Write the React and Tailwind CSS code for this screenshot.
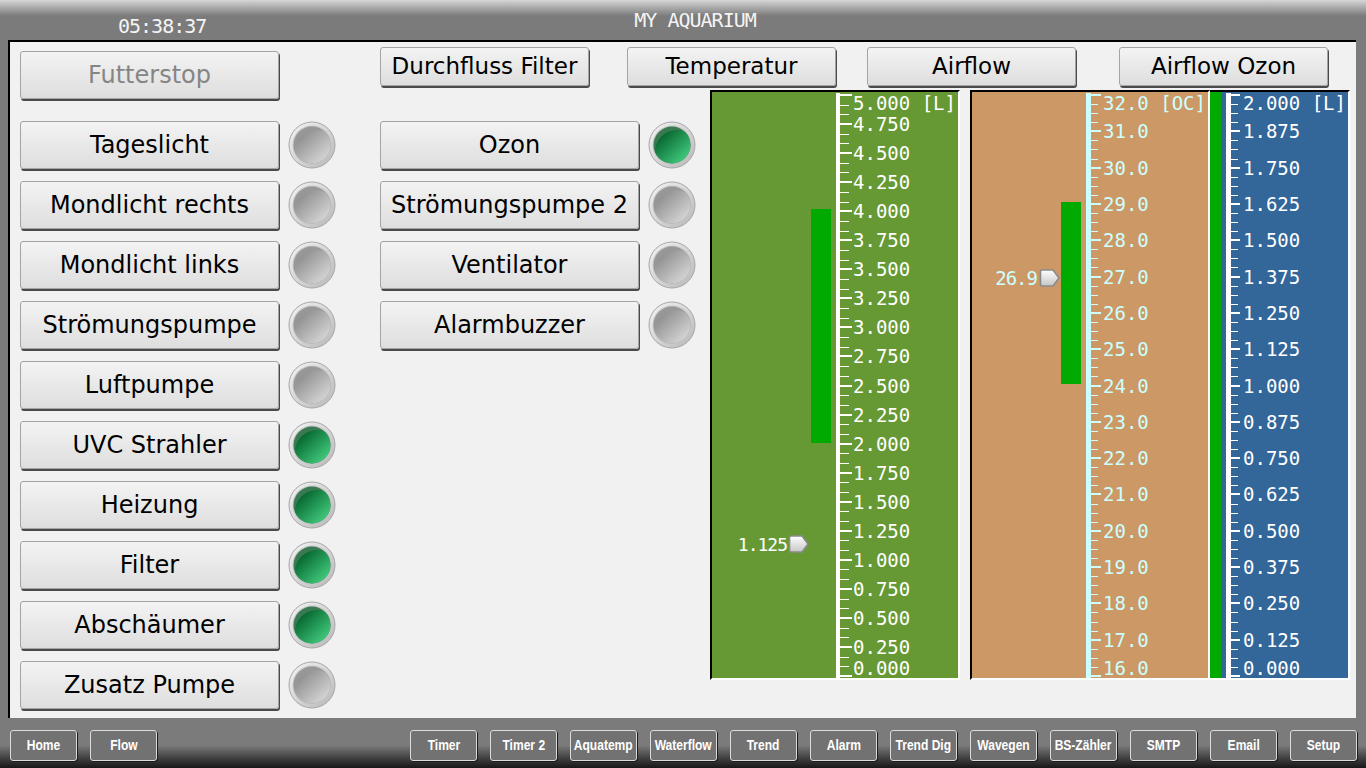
import React from 'react';

const leftItems = [
  { label: 'Tageslicht', on: false },
  { label: 'Mondlicht rechts', on: false },
  { label: 'Mondlicht links', on: false },
  { label: 'Strömungspumpe', on: false },
  { label: 'Luftpumpe', on: false },
  { label: 'UVC Strahler', on: true },
  { label: 'Heizung', on: true },
  { label: 'Filter', on: true },
  { label: 'Abschäumer', on: true },
  { label: 'Zusatz Pumpe', on: false },
];

const midItems = [
  { label: 'Ozon', on: true },
  { label: 'Strömungspumpe 2', on: false },
  { label: 'Ventilator', on: false },
  { label: 'Alarmbuzzer', on: false },
];

const navRight = ['Timer', 'Timer 2', 'Aquatemp', 'Waterflow', 'Trend', 'Alarm', 'Trend Dig', 'Wavegen', 'BS-Zähler', 'SMTP', 'Email', 'Setup'];

const btnBase =
  "flex items-center justify-center rounded-[3px] border border-[#a4a4a4] bg-linear-to-b from-[#f3f3f3] to-[#dedede] shadow-[1px_2px_0_#4a4a4a] font-['DejaVu_Sans',sans-serif] whitespace-nowrap";

// LED lamp
function Led({ on }) {
  const cap = on ? '#3a7a52' : '#979797';
  const a = on ? '#02602a' : '#8c8c8c';
  const b = on ? '#5cf7a0' : '#f4f4f4';
  const gid = on ? 'ledOnGrad' : 'ledOffGrad';
  return (
    <svg width="48" height="48" viewBox="0 0 48 48" className="shrink-0">
      <defs>
        <linearGradient id="ledRingGrad" x1="0" y1="0" x2="1" y2="1">
          <stop offset="0" stopColor="#f6f6f6" />
          <stop offset="1" stopColor="#b6b6b6" />
        </linearGradient>
        <linearGradient id={gid} x1="0.1" y1="0.1" x2="0.9" y2="0.95">
          <stop offset="0" stopColor={a} />
          <stop offset="1" stopColor={b} />
        </linearGradient>
        <clipPath id="ledClip">
          <circle cx="24" cy="24" r="18.5" />
        </clipPath>
      </defs>
      <circle cx="24" cy="24" r="23" fill="url(#ledRingGrad)" stroke="#a6a6a6" strokeWidth="1" />
      <circle cx="24" cy="24" r="19.5" fill="#c4c4c4" />
      <circle cx="24" cy="24" r="18.5" fill={cap} />
      <g clipPath="url(#ledClip)">
        <circle cx="29" cy="31" r="22" fill={`url(#${gid})`} />
      </g>
    </svg>
  );
}

function Marker() {
  return (
    <svg width="22" height="20" viewBox="0 0 22 20">
      <defs>
        <linearGradient id="markerGrad" x1="0" y1="0" x2="0" y2="1">
          <stop offset="0" stopColor="#ffffff" />
          <stop offset="1" stopColor="#c6c6c6" />
        </linearGradient>
      </defs>
      <path d="M3 2 H14 L20 10 L14 18 H3 Q1.5 18 1.5 16.5 V3.5 Q1.5 2 3 2 Z" fill="url(#markerGrad)" stroke="#8a8a8a" strokeWidth="1.6" />
    </svg>
  );
}

// scale with ticks + labels, drawn inside a gauge
function Scale({ labels, sub, lineX, lineW, majorLen, minorLen, labelX, color }) {
  const n = (labels.length - 1) * sub;
  const ticks = [];
  for (let k = 0; k <= n; k++) {
    const y = 3 + (k * 581) / n;
    const major = k % sub === 0;
    ticks.push(
      <rect
        key={k}
        x={lineX + lineW}
        y={major ? Math.round(y) - 1 : Math.round(y)}
        width={major ? majorLen : minorLen}
        height={major ? 2 : 1}
        fill={color}
      />
    );
  }
  return (
    <>
      <svg className="absolute left-0 top-0" width="250" height="586">
        <rect x={lineX} y="1" width={lineW} height="585" fill={color} />
        {ticks}
      </svg>
      {labels.map((t, i) => {
        const y = 3 + (i * 581) / (labels.length - 1);
        const top = Math.min(566, Math.max(1, y - 10));
        return (
          <div
            key={i}
            className="absolute text-[19px] leading-[20px] whitespace-pre font-['DejaVu_Sans_Mono',monospace]"
            style={{ left: labelX, top, color }}
          >
            {t}
          </div>
        );
      })}
    </>
  );
}

const g1Labels = Array.from({ length: 21 }, (_, i) => (i === 0 ? '5.000 [L]' : (5 - i * 0.25).toFixed(3)));
const g2Labels = Array.from({ length: 17 }, (_, i) => (i === 0 ? '32.0 [OC]' : (32 - i).toFixed(1)));
const g3Labels = Array.from({ length: 17 }, (_, i) => (i === 0 ? '2.000 [L]' : (2 - i * 0.125).toFixed(3)));

function NavBtn({ text }) {
  return (
    <div className="w-[67px] h-[31px] flex items-center justify-center rounded-[3px] border border-[#dcdcdc] bg-[#727272] shadow-[1px_1px_0_#1c1c1c] whitespace-nowrap">
      <span className="inline-block scale-x-[0.86]">{text}</span>
    </div>
  );
}

export default function App() {
  return (
    <div className="w-[1366px] h-[768px] flex flex-col bg-[#7b7b7b] overflow-hidden">
      {/* header */}
      <div className="h-[40px] shrink-0 flex items-start bg-linear-to-b from-[#d6d6d6] to-[#7b7b7b] to-[40%] text-[#f4f4f4] font-['DejaVu_Sans_Mono',monospace] text-[20px] leading-[20px] tracking-[-1px]">
        <span className="ml-[118px] mt-[16px]">05:38:37</span>
        <span className="ml-[428px] mt-[10px]">MY AQUARIUM</span>
      </div>

      {/* main panel */}
      <div className="ml-[8px] w-[1348px] h-[678px] shrink-0 border-t-2 border-l-2 border-black bg-[#f1f1f1] flex items-start">
        {/* left column */}
        <div className="ml-[10px] mt-[9px] flex flex-col">
          <div className={`${btnBase} w-[259px] h-[48px] text-[24px] text-[#858585]`}>Futterstop</div>
          <div className="mt-[22px] flex flex-col gap-[12px]">
            {leftItems.map((it) => (
              <div key={it.label} className="flex items-center gap-[9px]">
                <div className={`${btnBase} w-[259px] h-[48px] text-[24px] text-black`}>{it.label}</div>
                <Led on={it.on} />
              </div>
            ))}
          </div>
        </div>

        {/* right part */}
        <div className="ml-[44px] mt-[5px] flex flex-col">
          <div className="flex">
            <div className={`${btnBase} w-[209px] h-[39px] text-[23px] text-black`}>Durchfluss Filter</div>
            <div className={`${btnBase} ml-[38px] w-[209px] h-[39px] text-[23px] text-black`}>Temperatur</div>
            <div className={`${btnBase} ml-[31px] w-[209px] h-[39px] text-[23px] text-black`}>Airflow</div>
            <div className={`${btnBase} ml-[43px] w-[209px] h-[39px] text-[23px] text-black`}>Airflow Ozon</div>
          </div>

          <div className="flex items-start">
            <div className="mt-[35px] flex flex-col gap-[12px]">
              {midItems.map((it) => (
                <div key={it.label} className="flex items-center gap-[9px]">
                  <div className={`${btnBase} w-[259px] h-[48px] text-[24px] text-black`}>{it.label}</div>
                  <Led on={it.on} />
                </div>
              ))}
            </div>

            {/* gauges */}
            <div className="ml-[14px] mt-[4px] flex">
              <div className="relative w-[250px] h-[590px] border-2 border-t-black border-l-black border-r-white border-b-white bg-[#669933] overflow-hidden">
                <Scale labels={g1Labels} sub={3} lineX={124} lineW={4} majorLen={12} minorLen={9} labelX={141} color="#ffffff" />
                <div className="absolute left-[99px] top-[117px] w-[20px] h-[234px] bg-[#00aa00]" />
                <div className="absolute left-[76px] top-[442px]">
                  <Marker />
                </div>
                <div className="absolute right-[171px] top-[443px] text-[18px] leading-[20px] tracking-[-1px] text-white font-['DejaVu_Sans_Mono',monospace]">
                  1.125
                </div>
              </div>

              <div className="ml-[10px] relative w-[240px] h-[590px] border-2 border-t-black border-l-black border-r-white border-b-white bg-[#cc9966] overflow-hidden">
                <Scale labels={g2Labels} sub={4} lineX={114} lineW={5} majorLen={10} minorLen={7} labelX={131} color="#ccffff" />
                <div className="absolute left-[89px] top-[110px] w-[20px] h-[182px] bg-[#00aa00]" />
                <div className="absolute left-[67px] top-[176px]">
                  <Marker />
                </div>
                <div className="absolute right-[171px] top-[176px] text-[19px] leading-[20px] tracking-[-1px] text-[#ccffff] font-['DejaVu_Sans_Mono',monospace]">
                  26.9
                </div>
              </div>

              <div className="relative w-[140px] h-[590px] border-t-2 border-r-2 border-b-2 border-t-black border-r-white border-b-white bg-[#336699] overflow-hidden">
                <div className="absolute left-0 top-0 w-[11px] h-[586px] bg-[#00aa00]" />
                <Scale labels={g3Labels} sub={4} lineX={16} lineW={5} majorLen={9} minorLen={7} labelX={33} color="#ffffff" />
              </div>
            </div>
          </div>
        </div>
      </div>

      {/* bottom nav */}
      <div className="h-[50px] shrink-0 flex items-start pt-[12px] pl-[10px] bg-linear-to-b from-[#7b7b7b] from-55% to-[#181818] font-['Liberation_Sans',Arial,sans-serif] font-bold text-[14px] text-white">
        <div className="flex gap-[13px]">
          <NavBtn text="Home" />
          <NavBtn text="Flow" />
        </div>
        <div className="ml-[253px] flex gap-[13px]">
          {navRight.map((t) => (
            <NavBtn key={t} text={t} />
          ))}
        </div>
      </div>
    </div>
  );
}
